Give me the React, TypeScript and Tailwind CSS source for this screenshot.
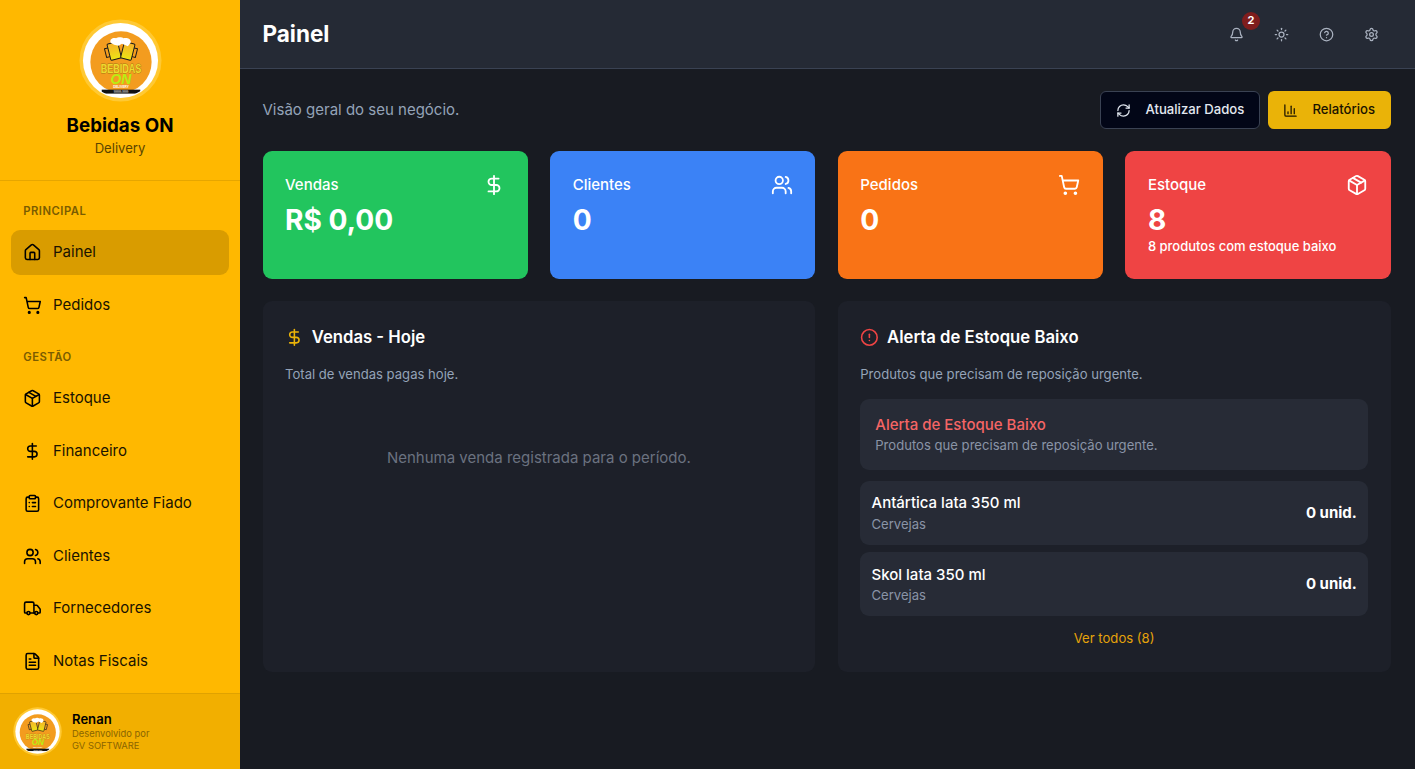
import { Bell, Sun, CircleHelp, Settings, RefreshCw, ChartColumn, DollarSign, Users, ShoppingCart, Package, CircleAlert, House, ClipboardList, Truck, FileText } from "lucide-react";
import type { ReactNode } from "react";

function Logo({ id, size }: { id: string; size: number }) {
  return (
    <svg width={size} height={size} viewBox="0 0 84 84" className="shrink-0">
      <defs>
        <clipPath id={id}><circle cx="42" cy="42" r="37" /></clipPath>
        <linearGradient id={id + "b"} x1="0" y1="0" x2="0" y2="1">
          <stop offset="0" stopColor="#f6b02a" />
          <stop offset="1" stopColor="#ece414" />
        </linearGradient>
      </defs>
      <circle cx="42" cy="42" r="41.5" fill="#ffc933" />
      <circle cx="42" cy="42" r="38" fill="#ffffff" />
      <circle cx="42.5" cy="43.5" r="31" fill="#f39c1f" />
      <g clipPath={`url(#${id})`}>
        <g stroke="#1a1a1a" strokeWidth="1" strokeLinejoin="round">
          <g transform="rotate(-14 35 32)">
            <rect x="30" y="24" width="11" height="17" rx="1" fill={`url(#${id}b)`} />
            <path d="M30 28h-3.5v9h3.5" fill="none" />
          </g>
          <g transform="rotate(14 50 32)">
            <rect x="44" y="24" width="11" height="17" rx="1" fill={`url(#${id}b)`} />
            <path d="M55 28h3.5v9h-3.5" fill="none" />
          </g>
        </g>
        <path d="M32 24c-1.500-4 3-5.500 5.500-4.500 2-1.500 6-1.500 7.500 0 3-1 7.500 0 7.500 4l-3 4-6-2.500-3.500 2-4.500-1z" fill="#ffffff" />
        <text x="42.5" y="55" textAnchor="middle" fontFamily="'Liberation Sans', sans-serif" fontWeight="700" fontSize="12" textLength="41" lengthAdjust="spacingAndGlyphs" fill="#efd92e" stroke="#a8790f" strokeWidth="0.8" paintOrder="stroke">BEBIDAS</text>
        <text x="42.5" y="65.5" textAnchor="middle" fontFamily="'Liberation Sans', sans-serif" fontWeight="700" fontStyle="italic" fontSize="14" fill="#b8ee12">ON</text>
        <text x="42.5" y="69.8" textAnchor="middle" fontFamily="'Liberation Sans', sans-serif" fontWeight="700" fontSize="3.2" fill="#ffffff">DELIVERY</text>
        <rect x="23" y="71.500" width="39" height="4" fill="#111111" />
        <text x="42.5" y="74.6" textAnchor="middle" fontFamily="'Liberation Sans', sans-serif" fontSize="2.8" fill="#ffffff">99999-9999</text>
      </g>
    </svg>
  );
}

function NavItem({ icon, label, active }: { icon: ReactNode; label: string; active?: boolean }) {
  return (
    <div className={`flex h-[45px] items-center gap-[11px] rounded-[9px] px-[12px] text-[15px] text-[#1a1300] ${active ? "bg-[#d99c00]" : ""}`}>
      <span className="flex w-[18.75px] justify-center text-black">{icon}</span>
      <span>{label}</span>
    </div>
  );
}

function NavLabel({ children, className }: { children: ReactNode; className: string }) {
  return <div className={`h-[15px] px-[12px] text-[11.25px] leading-[15px] font-semibold tracking-[0.5px] text-[#7a5c00] ${className}`}>{children}</div>;
}

function StatCard({ bg, title, value, sub, icon }: { bg: string; title: string; value: string; sub?: string; icon: ReactNode }) {
  return (
    <div className={`flex h-[128px] flex-col rounded-[9px] p-[22.5px] text-white ${bg}`}>
      <div className="flex items-start justify-between">
        <div className="text-[15px] leading-[22px] font-medium">{title}</div>
        <div>{icon}</div>
      </div>
      <div className="mt-[7.5px] text-[28.125px] leading-[34px] font-bold">{value}</div>
      {sub && <div className="text-[13px] leading-[18px] font-medium">{sub}</div>}
    </div>
  );
}

function StockRow({ name }: { name: string }) {
  return (
    <div className="flex h-[63.75px] items-center justify-between rounded-[9px] bg-[#272b36] px-[11.25px]">
      <div className="mt-[1.15px]">
        <div className="text-[15px] leading-[22.5px] font-medium text-white">{name}</div>
        <div className="-mt-[0.25px] text-[13.1px] leading-[19.7px] text-[#8a94a6]">Cervejas</div>
      </div>
      <div className="text-[15px] font-bold text-white">0 unid.</div>
    </div>
  );
}

export default function App() {
  const s = 18.75;
  return (
    <div className="flex h-[769px] w-full overflow-hidden bg-[#181b22] font-['Inter',sans-serif]">
      <aside className="flex w-[240px] shrink-0 flex-col bg-[#ffb800]">
        <div className="flex h-[181px] flex-col items-center border-b border-[#e6a600] pt-[19px]">
          <Logo id="main" size={83} />
          <div className="mt-[10px] text-[18.75px] leading-[28px] font-bold text-black">Bebidas ON</div>
          <div className="text-[13.1px] leading-[16px] text-[#5c4500]">Delivery</div>
        </div>
        <nav className="flex flex-1 flex-col px-[11.25px]">
          <NavLabel className="mt-[23px] mb-[11px]">PRINCIPAL</NavLabel>
          <div className="flex flex-col gap-[7.5px]">
            <NavItem active icon={<House size={s} />} label="Painel" />
            <NavItem icon={<ShoppingCart size={s} />} label="Pedidos" />
          </div>
          <NavLabel className="mt-[22.5px] mb-[11px]">GESTÃO</NavLabel>
          <div className="flex flex-col gap-[7.5px]">
            <NavItem icon={<Package size={s} />} label="Estoque" />
            <NavItem icon={<DollarSign size={s} />} label="Financeiro" />
            <NavItem icon={<ClipboardList size={s} />} label="Comprovante Fiado" />
            <NavItem icon={<Users size={s} />} label="Clientes" />
            <NavItem icon={<Truck size={s} />} label="Fornecedores" />
            <NavItem icon={<FileText size={s} />} label="Notas Fiscais" />
          </div>
        </nav>
        <div className="flex h-[76px] items-center gap-[10px] border-t border-[#e0a200] bg-[#f2af00] pl-[13px]">
          <Logo id="foot" size={49} />
          <div>
            <div className="text-[13.1px] leading-[17px] font-semibold text-black">Renan</div>
            <div className="text-[9.4px] leading-[12px] text-[#8a6500]">Desenvolvido por</div>
            <div className="text-[9.4px] leading-[12px] text-[#8a6500]">GV SOFTWARE</div>
          </div>
        </div>
      </aside>

      <div className="flex min-w-0 flex-1 flex-col">
        <header className="flex h-[69px] shrink-0 items-center justify-between border-b border-[#3a4253] bg-[#252a35] pr-[36px] pl-[22.5px]">
          <h1 className="text-[22.5px] font-bold text-white">Painel</h1>
          <div className="flex items-center gap-[30px] text-[#aab2c0]">
            <span className="relative">
              <Bell size={15} />
              <span className="absolute -top-[15px] left-[5px] ml-[8px] flex h-[18px] w-[18px] items-center justify-center rounded-full bg-[#7f1d1d] text-[11px] font-bold text-white">2</span>
            </span>
            <Sun size={15} />
            <CircleHelp size={15} />
            <Settings size={15} />
          </div>
        </header>

        <main className="flex flex-col pt-[22px] pr-[24.5px] pl-[22.5px]">
          <div className="flex h-[38px] items-center justify-between">
            <p className="text-[15px] text-[#94a3b8]">Visão geral do seu negócio.</p>
            <div className="flex gap-[8px]">
              <button className="flex h-[38px] w-[160px] items-center gap-[15px] rounded-[6px] border border-[#3a4253] bg-[#020617] pl-[15px] text-[13.125px] font-medium text-[#e2e8f0]">
                <RefreshCw size={15} />
                Atualizar Dados
              </button>
              <button className="flex h-[38px] w-[123px] items-center gap-[15px] rounded-[6px] bg-[#eab308] pl-[15px] text-[13.125px] font-medium text-[#1a1300]">
                <ChartColumn size={15} />
                Relatórios
              </button>
            </div>
          </div>

          <div className="mt-[22px] grid grid-cols-4 gap-[22.5px]">
            <StatCard bg="bg-[#22c55e]" title="Vendas" value="R$ 0,00" icon={<DollarSign size={22} />} />
            <StatCard bg="bg-[#3b82f6]" title="Clientes" value="0" icon={<Users size={22} />} />
            <StatCard bg="bg-[#f97316]" title="Pedidos" value="0" icon={<ShoppingCart size={22} />} />
            <StatCard bg="bg-[#ef4444]" title="Estoque" value="8" sub="8 produtos com estoque baixo" icon={<Package size={22} />} />
          </div>

          <div className="mt-[22px] grid h-[370.5px] grid-cols-2 gap-[22.5px]">
            <section className="rounded-[9px] bg-[#1d2029] px-[22.5px] pt-[23px]">
              <div className="flex h-[27px] items-center gap-[8px] text-[16.7px] font-semibold text-white">
                <DollarSign size={s} className="text-[#eab308]" />
                Vendas - Hoje
              </div>
              <p className="mt-[13px] text-[13.1px] leading-[20px] text-[#94a3b8]">Total de vendas pagas hoje.</p>
              <p className="mt-[63px] text-center text-[15px] leading-[22px] text-[#6b7280]">Nenhuma venda registrada para o período.</p>
            </section>
            <section className="rounded-[9px] bg-[#1d2029] px-[22.5px] pt-[23px]">
              <div className="flex h-[27px] items-center gap-[8px] text-[16.7px] font-semibold text-white">
                <CircleAlert size={s} className="text-[#ef4444]" />
                Alerta de Estoque Baixo
              </div>
              <p className="mt-[13px] text-[13.1px] leading-[20px] text-[#94a3b8]">Produtos que precisam de reposição urgente.</p>
              <div className="mt-[15px] flex h-[71px] flex-col rounded-[9px] bg-[#272b36] px-[15px] pt-[16px]">
                <div className="text-[15px] leading-[20px] font-medium text-[#f56565]">Alerta de Estoque Baixo</div>
                <div className="mt-[0.5px] text-[13.1px] leading-[19px] text-[#8a94a6]">Produtos que precisam de reposição urgente.</div>
              </div>
              <div className="mt-[11px] flex flex-col gap-[7.5px]">
                <StockRow name="Antártica lata 350 ml" />
                <StockRow name="Skol lata 350 ml" />
              </div>
              <div className="mt-[11.5px] text-center text-[13.1px] leading-[20px] text-[#e5a30a]">Ver todos (8)</div>
            </section>
          </div>
        </main>
      </div>
    </div>
  );
}
